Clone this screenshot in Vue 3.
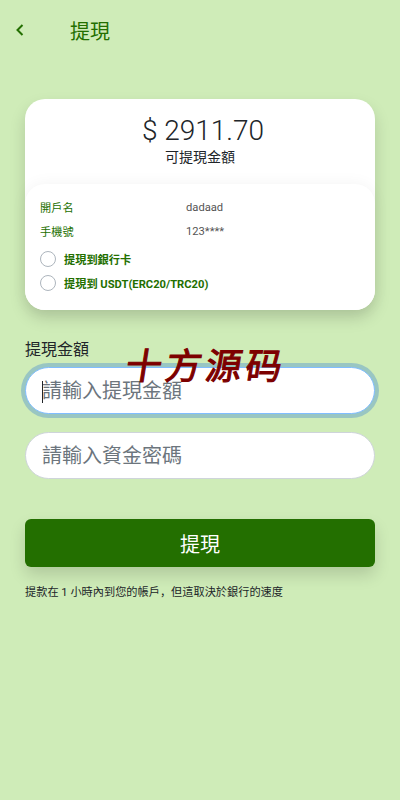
<template>
	<div class="page">
		<header class="top-bar">
			<button class="back" type="button" aria-label="back">
				<svg width="10" height="14" viewBox="0 0 10 14">
					<path d="M7.5 2 L2.5 7 L7.5 12" fill="none" stroke="#236f00" stroke-width="2" />
				</svg>
			</button>
			<h1 class="title">提現</h1>
		</header>

		<section class="card">
			<div class="balance">
				<div class="amount">$ 2911.70</div>
				<div class="amount-label">可提現金額</div>
			</div>
			<div class="details">
				<div v-for="row in rows" :key="row.label" class="row">
					<span class="row-label">{{ row.label }}</span>
					<span class="row-value">{{ row.value }}</span>
				</div>
				<label v-for="opt in options" :key="opt" class="option">
					<span class="radio"></span>
					<span>{{ opt }}</span>
				</label>
			</div>
		</section>

		<form class="form" @submit.prevent>
			<div class="field-label-wrap">
				<label class="field-label">提現金額</label>
				<span class="watermark">十方源码</span>
			</div>
			<div class="input focused"><i class="caret"></i>請輸入提現金額</div>
			<div class="input second">請輸入資金密碼</div>
			<button class="submit" type="button">提現</button>
			<p class="note">提款在 1 小時內到您的帳戶，但這取決於銀行的速度</p>
		</form>
	</div>
</template>

<script setup>
const rows = [
	{ label: "開戶名", value: "dadaad" },
	{ label: "手機號", value: "123****" },
];
const options = ["提現到銀行卡", "提現到 USDT(ERC20/TRC20)"];
</script>

<style scoped>
.page {
	width: 400px;
	height: 800px;
	box-sizing: border-box;
	background: #cfecb8;
	font-family: Roboto, "Noto Sans CJK SC", sans-serif;
	color: #212529;
	overflow: hidden;
}
.top-bar {
	display: flex;
	align-items: center;
	height: 60px;
	padding-left: 15px;
}
.back {
	display: flex;
	width: 55px;
	padding: 0;
	border: 0;
	background: none;
}
.title {
	margin: 0;
	font-size: 20px;
	font-weight: 400;
	color: #236f00;
}
.card {
	margin: 39px 25px 0;
	background: #fff;
	border-radius: 20px;
	box-shadow: 0 8px 16px rgba(0, 0, 0, 0.15);
}
.balance {
	height: 85px;
	padding-top: 13px;
	box-sizing: border-box;
	text-align: center;
}
.amount {
	padding-left: 6px;
	font-size: 28px;
	font-weight: 300;
	line-height: 37px;
}
.amount-label {
	font-size: 14px;
	line-height: 17px;
}
.details {
	height: 126px;
	box-sizing: border-box;
	padding: 11px 15px 0;
	border-radius: 20px;
	background: #fff;
	box-shadow: 0 0 16px rgba(0, 0, 0, 0.05);
}
.row {
	display: flex;
	height: 24px;
	align-items: center;
	font-size: 11.2px;
}
.row-label {
	width: 146px;
	color: #236f00;
}
.row-value {
	color: #555;
}
.option {
	display: flex;
	align-items: center;
	gap: 8px;
	height: 24px;
	font-size: 11.2px;
	font-weight: 700;
	color: #236f00;
}
.row + .option {
	margin-top: 4px;
}
.radio {
	width: 16px;
	height: 16px;
	box-sizing: border-box;
	border: 1px solid #adb5bd;
	border-radius: 50%;
	background: #fff;
}
.form {
	margin: 0 25px;
}
.field-label-wrap {
	position: relative;
	margin-top: 30px;
	height: 20px;
	margin-bottom: 9px;
}
.field-label {
	font-size: 16px;
	line-height: 20px;
}
.watermark {
	position: absolute;
	left: 101px;
	top: 5px;
	font-size: 36px;
	line-height: 44px;
	font-weight: 400;
	letter-spacing: 4px;
	-webkit-text-stroke: 1.1px #7d0000;
	color: #7d0000;
	white-space: nowrap;
	transform: skewX(-9deg);
	z-index: 2;
}
.input {
	position: relative;
	height: 47px;
	box-sizing: border-box;
	padding-left: 16px;
	border: 1px solid #ced4da;
	border-radius: 24px;
	background: #fff;
	font-size: 20px;
	line-height: 46px;
	color: #6c757d;
}
.input.focused {
	border-color: #80bdff;
	box-shadow: 0 0 0 4px rgba(30, 110, 220, 0.3);
	margin-top: -2px;
	line-height: 47px;
}
.caret {
	position: absolute;
	left: 16px;
	top: 13px;
	width: 1px;
	height: 22px;
	background: #212529;
}
.input.second {
	margin-top: 18px;
}
.submit {
	display: block;
	width: 100%;
	height: 48px;
	margin-top: 40px;
	border: 0;
	border-radius: 6px;
	background: #236f00;
	color: #fff;
	font-family: inherit;
	font-size: 20px;
	box-shadow: 0 8px 16px rgba(0, 0, 0, 0.15);
}
.note {
	margin: 18px 0 0;
	font-size: 11.2px;
	line-height: 16px;
}
</style>
